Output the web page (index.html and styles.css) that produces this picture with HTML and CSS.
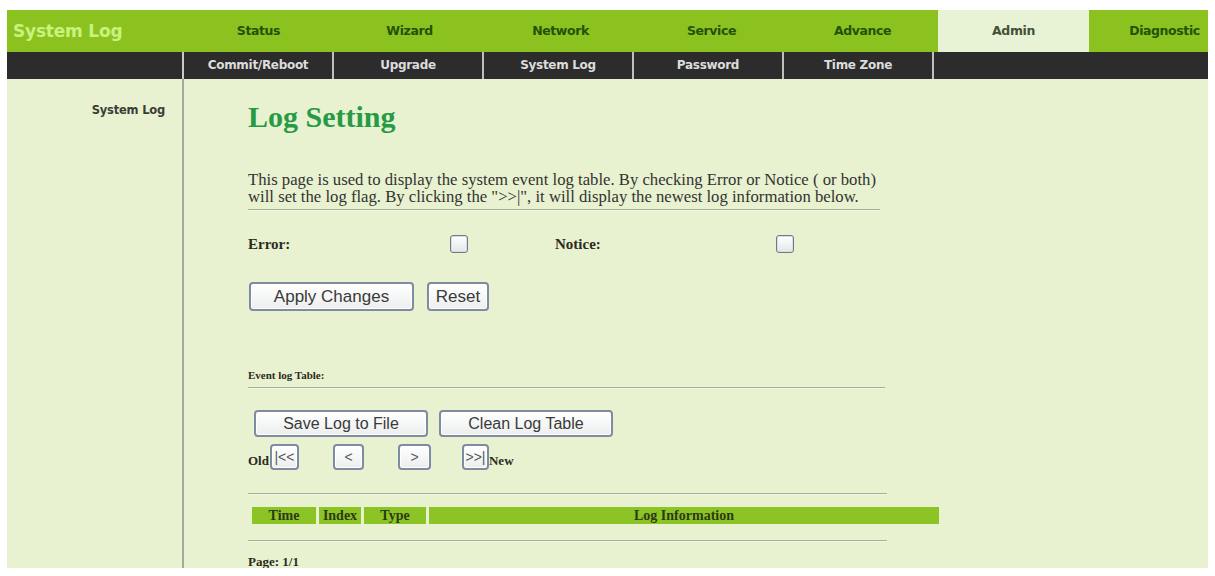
FILE: index.html
```html
<!DOCTYPE html>
<html>
<head>
<meta charset="utf-8">
<title>System Log</title>
<link rel="stylesheet" href="styles.css">
</head>
<body>
<div class="frame">
  <div class="topnav">
    <div class="brand">System Log</div>
    <div class="tab">Status</div>
    <div class="tab">Wizard</div>
    <div class="tab">Network</div>
    <div class="tab">Service</div>
    <div class="tab">Advance</div>
    <div class="tab active">Admin</div>
    <div class="tab">Diagnostic</div>
  </div>
  <div class="subnav">
    <div class="sub-blank"></div>
    <div class="sub">Commit/Reboot</div>
    <div class="sub">Upgrade</div>
    <div class="sub">System Log</div>
    <div class="sub">Password</div>
    <div class="sub">Time Zone</div>
    <div class="sub-rest"></div>
  </div>
  <div class="content">
    <aside class="side">
      <div class="side-link">System Log</div>
    </aside>
    <main class="main">
      <h1 class="title">Log Setting</h1>
      <p class="desc">This page is used to display the system event log table. By checking Error or Notice ( or both)<br>will set the log flag. By clicking the "&gt;&gt;|", it will display the newest log information below.</p>
      <hr class="rule rule-a">
      <div class="flags">
        <span class="flag-label">Error:</span>
        <span class="flag-box"><input type="checkbox" class="chk"></span>
        <span class="flag-label">Notice:</span>
        <span class="flag-box"><input type="checkbox" class="chk"></span>
      </div>
      <div class="actions">
        <button class="btn btn-apply">Apply Changes</button>
        <button class="btn btn-reset">Reset</button>
      </div>
      <div class="section-title">Event log Table:</div>
      <hr class="rule rule-b">
      <div class="log-actions">
        <button class="btn btn-save">Save Log to File</button>
        <button class="btn btn-clean">Clean Log Table</button>
      </div>
      <div class="pager">
        <span class="pager-text">Old</span>
        <button class="btn pg pg-first">|&lt;&lt;</button>
        <button class="btn pg pg-prev">&lt;</button>
        <button class="btn pg pg-next">&gt;</button>
        <button class="btn pg pg-last">&gt;&gt;|</button>
        <span class="pager-text">New</span>
      </div>
      <hr class="rule rule-c">
      <table class="log">
        <thead>
          <tr>
            <th class="c-time">Time</th>
            <th class="c-index">Index</th>
            <th class="c-type">Type</th>
            <th class="c-info">Log Information</th>
          </tr>
        </thead>
      </table>
      <hr class="rule rule-d">
      <div class="page-info">Page: 1/1</div>
    </main>
  </div>
</div>
</body>
</html>
```

FILE: styles.css
```css
html, body {
  margin: 0;
  padding: 0;
  background: #ffffff;
}

.frame {
  margin: 10px 7px 0 7px;
  width: 1201px;
  height: 558px;
  overflow: hidden;
  display: flex;
  flex-direction: column;
  background: #e8f2d0;
}

/* top navigation */
.topnav {
  display: flex;
  height: 42px;
  flex: 0 0 42px;
  background: #8bc21f;
  overflow: hidden;
}

.brand {
  flex: 0 0 170px;
  padding-left: 6px;
  font-family: "DejaVu Sans", Verdana, sans-serif;
  font-weight: bold;
  font-size: 17px;
  line-height: 42px;
  color: #c9f27e;
  letter-spacing: -0.2px;
  white-space: nowrap;
}

.tab {
  flex: 0 0 151px;
  text-align: center;
  font-family: "DejaVu Sans", Verdana, sans-serif;
  font-weight: bold;
  font-size: 12.5px;
  line-height: 42px;
  color: #24510a;
  letter-spacing: -0.4px;
  white-space: nowrap;
}

.tab.active {
  background: #e8f2d4;
  color: #43503a;
}

/* sub navigation */
.subnav {
  display: flex;
  height: 27px;
  flex: 0 0 27px;
  background: #2c2c2c;
}

.sub-blank {
  flex: 0 0 175px;
  border-right: 2px solid #c9cbc2;
}

.sub {
  flex: 0 0 148px;
  border-right: 2px solid #bfc1b8;
  text-align: center;
  font-family: "DejaVu Sans", Verdana, sans-serif;
  font-weight: bold;
  font-size: 12px;
  line-height: 27px;
  color: #dcdcdc;
  letter-spacing: -0.3px;
  white-space: nowrap;
}

.sub-rest {
  flex: 1 1 auto;
}

/* content */
.content {
  display: flex;
  flex: 1 1 auto;
  min-height: 0;
  background: #e8f2d0;
}

.side {
  flex: 0 0 175px;
  border-right: 2px solid #a3a99b;
}

.side-link {
  padding-top: 23px;
  padding-right: 17px;
  text-align: right;
  font-family: "DejaVu Sans", Verdana, sans-serif;
  font-weight: bold;
  font-size: 11.5px;
  line-height: 16px;
  color: #3b3d36;
  letter-spacing: -0.2px;
}

.main {
  flex: 1 1 auto;
  padding: 20px 0 0 64px;
  font-family: "Liberation Serif", "Times New Roman", serif;
  color: #2e2e2a;
}

.title {
  margin: 0;
  font-family: "Liberation Serif", "Times New Roman", serif;
  font-weight: bold;
  font-size: 30px;
  line-height: 36px;
  color: #279a45;
}

.desc {
  margin: 36px 0 0 0;
  font-size: 16.7px;
  line-height: 17px;
  color: #333330;
  white-space: nowrap;
}

.rule {
  display: block;
  margin: 0;
  height: 0;
  border: 0;
  border-top: 1px solid #a7af99;
  border-bottom: 1px solid #f3f7e8;
}

.rule-a {
  width: 632px;
  margin-top: 4px;
}

.rule-b {
  width: 637px;
  margin-top: 5px;
}

.rule-c {
  width: 639px;
  margin-top: 23px;
}

.rule-d {
  width: 639px;
  margin-top: 13px;
}

/* flags */
.flags {
  display: grid;
  grid-template-columns: 202px 105px 221px auto;
  align-items: center;
  height: 24px;
  margin-top: 21px;
}

.flag-label {
  font-weight: bold;
  font-size: 15px;
  color: #2b2b22;
}

.flag-box {
  display: flex;
  align-items: center;
}

.chk {
  appearance: none;
  -webkit-appearance: none;
  margin: 0;
  width: 18px;
  height: 18px;
  border: 1px solid #6f7b86;
  border-radius: 3px;
  background: linear-gradient(#ffffff, #e4e6e8);
  box-shadow: inset 0 0 0 1px #d7dde2;
}

/* buttons */
.btn {
  margin: 0;
  padding: 0;
  font-family: "Liberation Sans", Arial, sans-serif;
  color: #3a3a3a;
  background: linear-gradient(#ffffff, #eceeee);
  border: 2px solid #7d8ca2;
  border-radius: 4px;
  box-shadow: inset 0 0 0 1px #ffffff;
  cursor: default;
}

.actions {
  display: flex;
  gap: 13px;
  margin-top: 26px;
  margin-left: 1px;
}

.btn-apply {
  width: 165px;
  height: 29px;
  font-size: 17px;
}

.btn-reset {
  width: 62px;
  height: 29px;
  font-size: 17px;
}

.section-title {
  margin-top: 57px;
  font-weight: bold;
  font-size: 11px;
  line-height: 14px;
  color: #2b2b22;
}

.log-actions {
  display: flex;
  gap: 11px;
  margin-top: 21px;
  margin-left: 6px;
}

.btn-save,
.btn-clean {
  width: 174px;
  height: 27px;
  font-size: 16px;
}

.pager {
  display: flex;
  align-items: flex-end;
  margin-top: 7px;
  margin-left: 0;
  height: 26px;
}

.pager-text {
  font-weight: bold;
  font-size: 13px;
  line-height: 18px;
  color: #2b2b22;
}

.pg {
  height: 26px;
  font-size: 14px;
  color: #555a60;
}

.pg-first {
  width: 29px;
  margin-left: 1px;
  margin-right: 34px;
}

.pg-prev {
  width: 31px;
  margin-right: 34px;
}

.pg-next {
  width: 33px;
  margin-right: 31px;
}

.pg-last {
  width: 27px;
}

/* log table */
.log {
  border-collapse: separate;
  border-spacing: 3px;
  margin-top: 9px;
  margin-left: 1px;
}

.log th {
  height: 17px;
  padding: 0;
  background: #8cc425;
  font-family: "Liberation Serif", "Times New Roman", serif;
  font-weight: bold;
  font-size: 14px;
  line-height: 17px;
  color: #2c3a12;
  text-align: center;
}

.c-time { width: 64px; }
.c-index { width: 42px; }
.c-type { width: 62px; }
.c-info { width: 510px; }

.page-info {
  margin-top: 13px;
  font-weight: bold;
  font-size: 13px;
  line-height: 14px;
  color: #2b2b22;
}
```
